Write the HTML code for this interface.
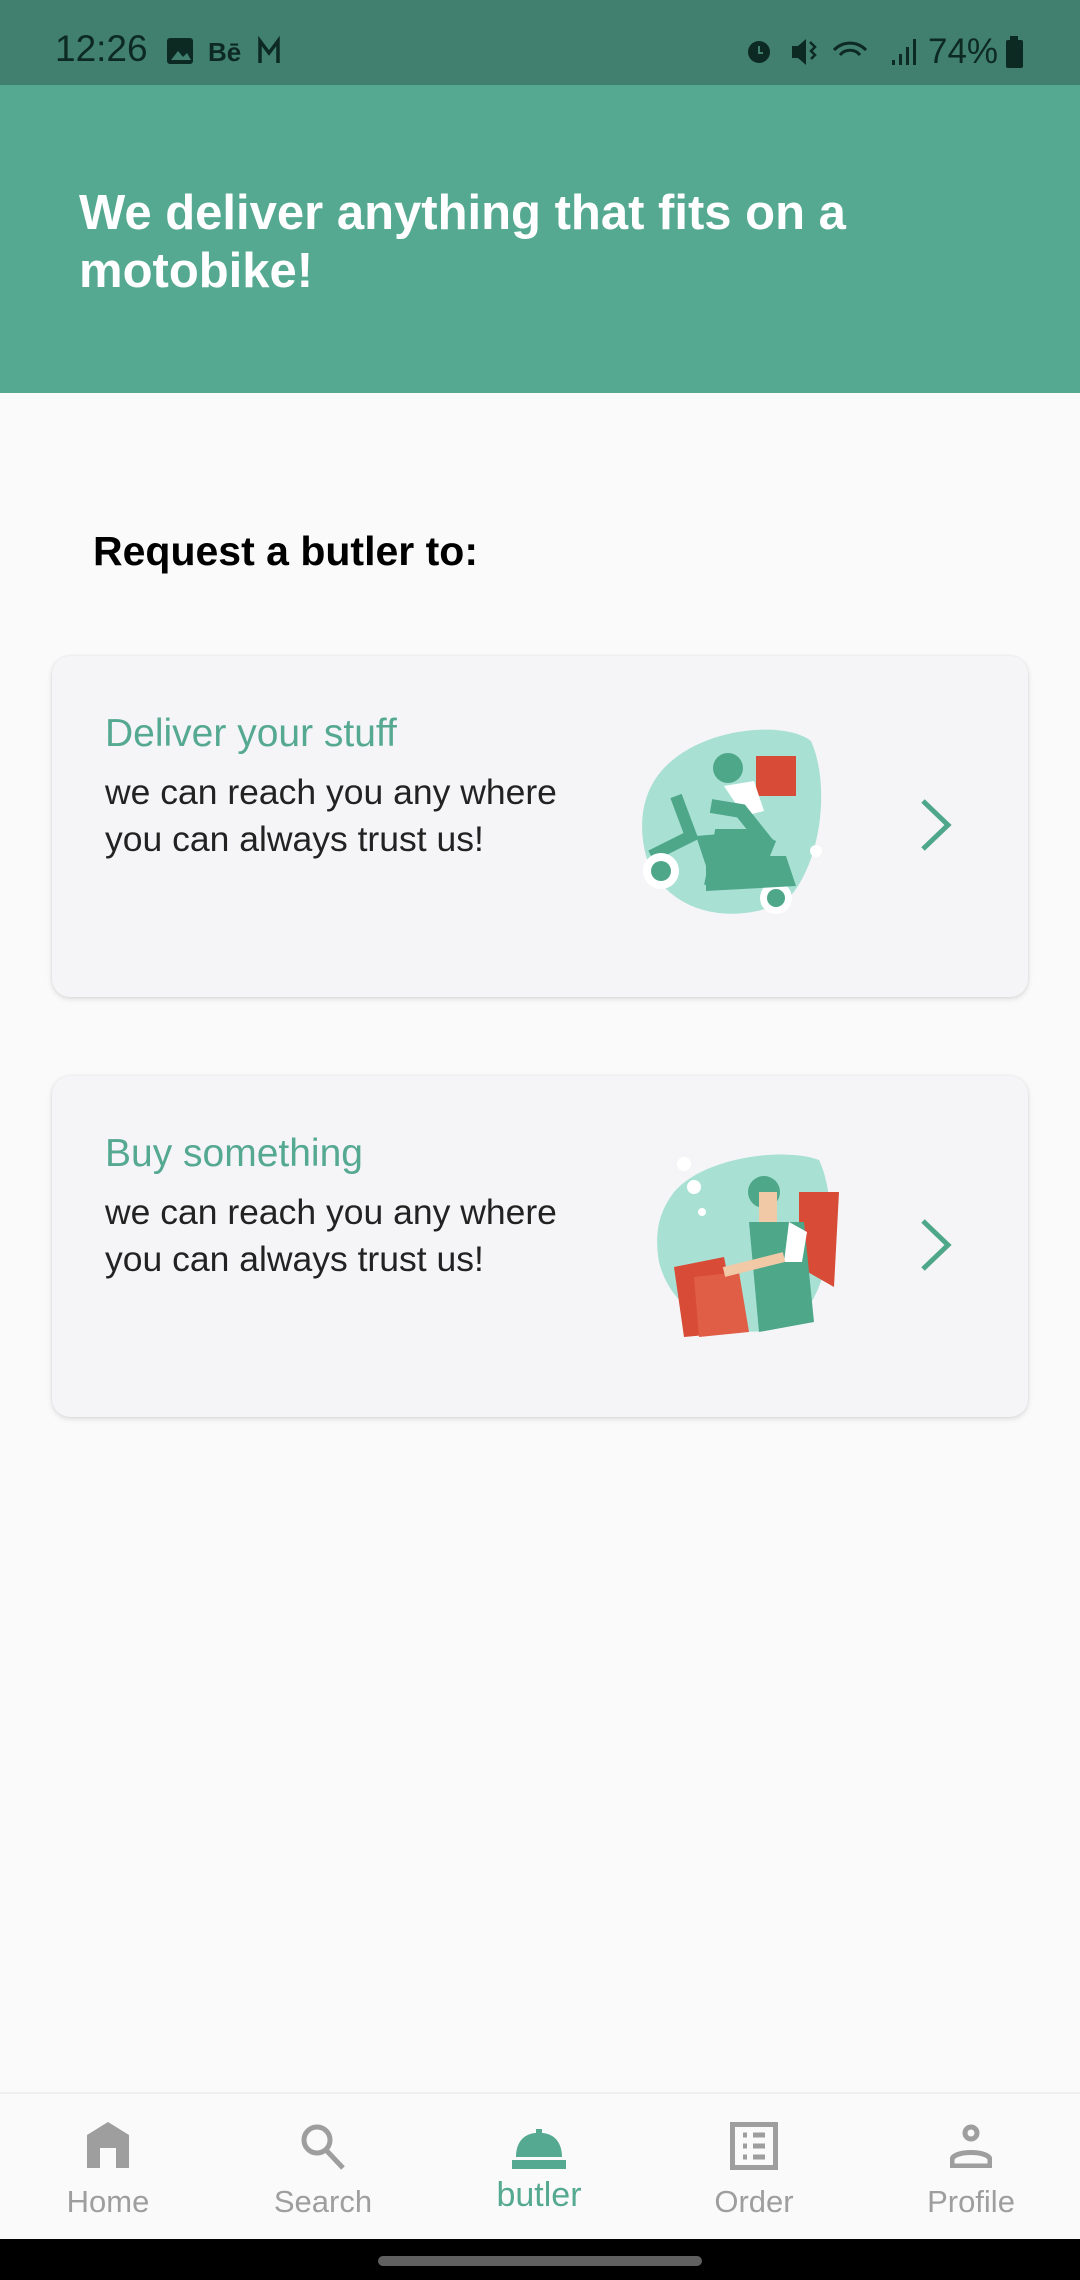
<!DOCTYPE html>
<html><head><meta charset="utf-8"><style>
*{margin:0;padding:0;box-sizing:border-box}
body{width:1080px;height:2280px;background:#fafafa;font-family:"Liberation Sans",Roboto,sans-serif;position:relative;overflow:hidden}
.abs{position:absolute}
.sb{left:0;top:0;width:1080px;height:85px;background:#417f6e}
.hd{left:0;top:85px;width:1080px;height:308px;background:#55a990}
.card{left:52px;width:976px;height:341px;background:#f5f5f7;border-radius:18px;box-shadow:0 2px 6px rgba(0,0,0,.12),0 0 2px rgba(0,0,0,.08)}
.t{color:#55a990;font-size:39px;position:absolute;left:53px}
.b{color:#222;font-size:35.5px;line-height:47px;position:absolute;left:53px}
.nav{left:0;top:2092px;width:1080px;height:147px;background:#fafafa;border-top:2px solid #eee}
.lbl{position:absolute;top:2184px;width:200px;text-align:center;color:#9e9e9e;font-size:31px}
</style></head><body>
<div class="abs sb"></div>
<div class="abs" style="left:55px;top:28px;font-size:37px;color:#0d2a22">12:26</div>
<svg class="abs" style="left:166px;top:36px" width="130" height="30" viewBox="0 0 130 30">
<rect x="1" y="2" width="26" height="26" rx="3" fill="#0d2a22"/><path d="M5 24l7-9 5 6 4-4 4 7z" fill="#417f6e"/>
<text x="42" y="25" font-size="26" font-weight="bold" fill="#0d2a22" font-family="Liberation Sans">Bē</text>
<path d="M94 27V5l9 12 9-12v22" stroke="#0d2a22" stroke-width="3.5" fill="none"/></svg>
<svg class="abs" style="left:742px;top:34px" width="265" height="34" viewBox="0 0 265 34">
<circle cx="17" cy="18" r="11" fill="#0d2a22"/><path d="M17 12v7h4" stroke="#417f6e" stroke-width="2" fill="none"/>
<path d="M50 12h6l8-7v26l-8-7h-6z" fill="#0d2a22"/><path d="M68 8l5 5-4 4 4 4-4 4" stroke="#0d2a22" stroke-width="2.5" fill="none"/>
<path d="M92 16a22 22 0 0 1 32 0M98 21a13 13 0 0 1 20 0" stroke="#0d2a22" stroke-width="3" fill="none"/>
<rect x="150" y="26" width="3" height="5" fill="#0d2a22"/><rect x="157" y="20" width="3" height="11" fill="#0d2a22"/><rect x="164" y="13" width="3" height="18" fill="#0d2a22"/><rect x="171" y="5" width="3" height="26" fill="#0d2a22"/>
<text x="186" y="29" font-size="35" fill="#0d2a22" font-family="Liberation Sans">74%</text></svg>
<svg class="abs" style="left:1005px;top:36px" width="20" height="32"><rect x="5" y="0" width="8" height="4" fill="#0d2a22"/><rect x="1" y="4" width="17" height="28" rx="2" fill="#0d2a22"/></svg>
<div class="abs hd"></div>
<div class="abs" style="left:79px;top:184px;color:#fff;font-size:49px;line-height:58px;font-weight:bold;width:1000px">We deliver anything that fits on a<br>motobike!</div>
<div class="abs" style="left:93px;top:528px;font-size:41px;color:#000;font-weight:bold">Request a butler to:</div>

<div class="abs card" style="top:656px">
<div class="t" style="top:56px">Deliver your stuff</div>
<div class="b" style="top:113px">we can reach you any where<br>you can always trust us!</div>
<svg class="abs" style="left:584px;top:70px" width="200" height="200" viewBox="0 0 200 200">
<path d="M30 40 C70 0 150 -5 175 15 C195 60 185 140 150 175 C100 200 30 190 10 130 C0 90 10 60 30 40z" fill="#a8e0d3"/>
<circle cx="92" cy="42" r="15" fill="#4ea789"/><rect x="120" y="30" width="40" height="40" fill="#d84b37"/>
<path d="M88 60l30 -5 10 30 -20 5z" fill="#fff"/><path d="M75 80l30 5 20 25-40 0-10 50" stroke="#4ea789" stroke-width="14" fill="none"/>
<path d="M60 110l10 30h60l10-25-20-10z" fill="#4ea789"/><path d="M40 70l15 40-40 20" stroke="#4ea789" stroke-width="12" fill="none"/>
<circle cx="25" cy="145" r="18" fill="#fff"/><circle cx="25" cy="145" r="10" fill="#4ea789"/>
<circle cx="140" cy="172" r="16" fill="#fff"/><circle cx="140" cy="172" r="9" fill="#4ea789"/>
<path d="M70 130h80l10 30-90 5z" fill="#4ea789"/><circle cx="180" cy="125" r="6" fill="#fff"/></svg>
<svg class="abs" style="left:866px;top:142px" width="36" height="54"><path d="M5 3l25 24-25 24" stroke="#4ea789" stroke-width="5" fill="none"/></svg>
</div>

<div class="abs card" style="top:1076px">
<div class="t" style="top:56px">Buy something</div>
<div class="b" style="top:113px">we can reach you any where<br>you can always trust us!</div>
<svg class="abs" style="left:602px;top:76px" width="200" height="190" viewBox="0 0 200 190">
<path d="M20 40 C50 5 130 -5 165 8 C185 50 180 140 140 170 C90 195 20 170 5 110 C0 80 5 60 20 40z" fill="#a8e0d3"/>
<circle cx="30" cy="12" r="7" fill="#fff"/><circle cx="40" cy="35" r="7" fill="#fff"/><circle cx="48" cy="60" r="4" fill="#fff"/>
<circle cx="110" cy="40" r="16" fill="#4ea789"/><rect x="105" y="40" width="18" height="30" fill="#f2c9a6"/>
<path d="M145 40l40 0 -5 95-35 -20z" fill="#d84b37"/><path d="M95 70h55l10 100-55 10z" fill="#4ea789"/><path d="M135 70l18 10-5 30h-18z" fill="#fff"/>
<path d="M20 115l50-10 15 75-55 5z" fill="#d84b37"/><path d="M40 125l45-5 10 60-50 5z" fill="#e05d46"/><path d="M70 120l60-15" stroke="#f2c9a6" stroke-width="10"/></svg>
<svg class="abs" style="left:866px;top:142px" width="36" height="54"><path d="M5 3l25 24-25 24" stroke="#4ea789" stroke-width="5" fill="none"/></svg>
</div>

<div class="abs nav"></div>
<svg class="abs" style="left:85px;top:2122px" width="46" height="46" viewBox="0 0 46 46"><path d="M2 13L23 0 44 13V46H31V26H15V46H2z" fill="#9e9e9e"/></svg>
<svg class="abs" style="left:298px;top:2122px" width="50" height="50"><circle cx="19" cy="18" r="13" stroke="#9e9e9e" stroke-width="5" fill="none"/><path d="M28 28l17 18" stroke="#9e9e9e" stroke-width="5"/></svg>
<svg class="abs" style="left:512px;top:2127px" width="54" height="42"><path d="M4 30C4 10 18 6 24 6V2h6v4c6 0 20 4 20 24z" fill="#55a990"/><rect x="0" y="33" width="54" height="9" fill="#55a990"/></svg>
<svg class="abs" style="left:730px;top:2122px" width="48" height="48"><rect x="2.5" y="2.5" width="43" height="43" stroke="#9e9e9e" stroke-width="5" fill="none"/><path d="M13 13h4M23 13h12M13 24h4M23 24h12M13 35h4M23 35h12" stroke="#9e9e9e" stroke-width="5"/></svg>
<svg class="abs" style="left:950px;top:2124px" width="42" height="44"><circle cx="21" cy="9" r="6" stroke="#9e9e9e" stroke-width="5" fill="none"/><path d="M2 42V36C2 26 40 26 40 36V42z" stroke="#9e9e9e" stroke-width="5" fill="none"/></svg>
<div class="lbl" style="left:8px">Home</div>
<div class="lbl" style="left:223px">Search</div>
<div class="lbl" style="left:439px;color:#55a990;font-size:34px;top:2176px">butler</div>
<div class="lbl" style="left:654px">Order</div>
<div class="lbl" style="left:871px">Profile</div>
<div class="abs" style="left:0;top:2239px;width:1080px;height:41px;background:#000"></div>
<div class="abs" style="left:378px;top:2256px;width:324px;height:10px;border-radius:5px;background:#606060"></div>
</body></html>
